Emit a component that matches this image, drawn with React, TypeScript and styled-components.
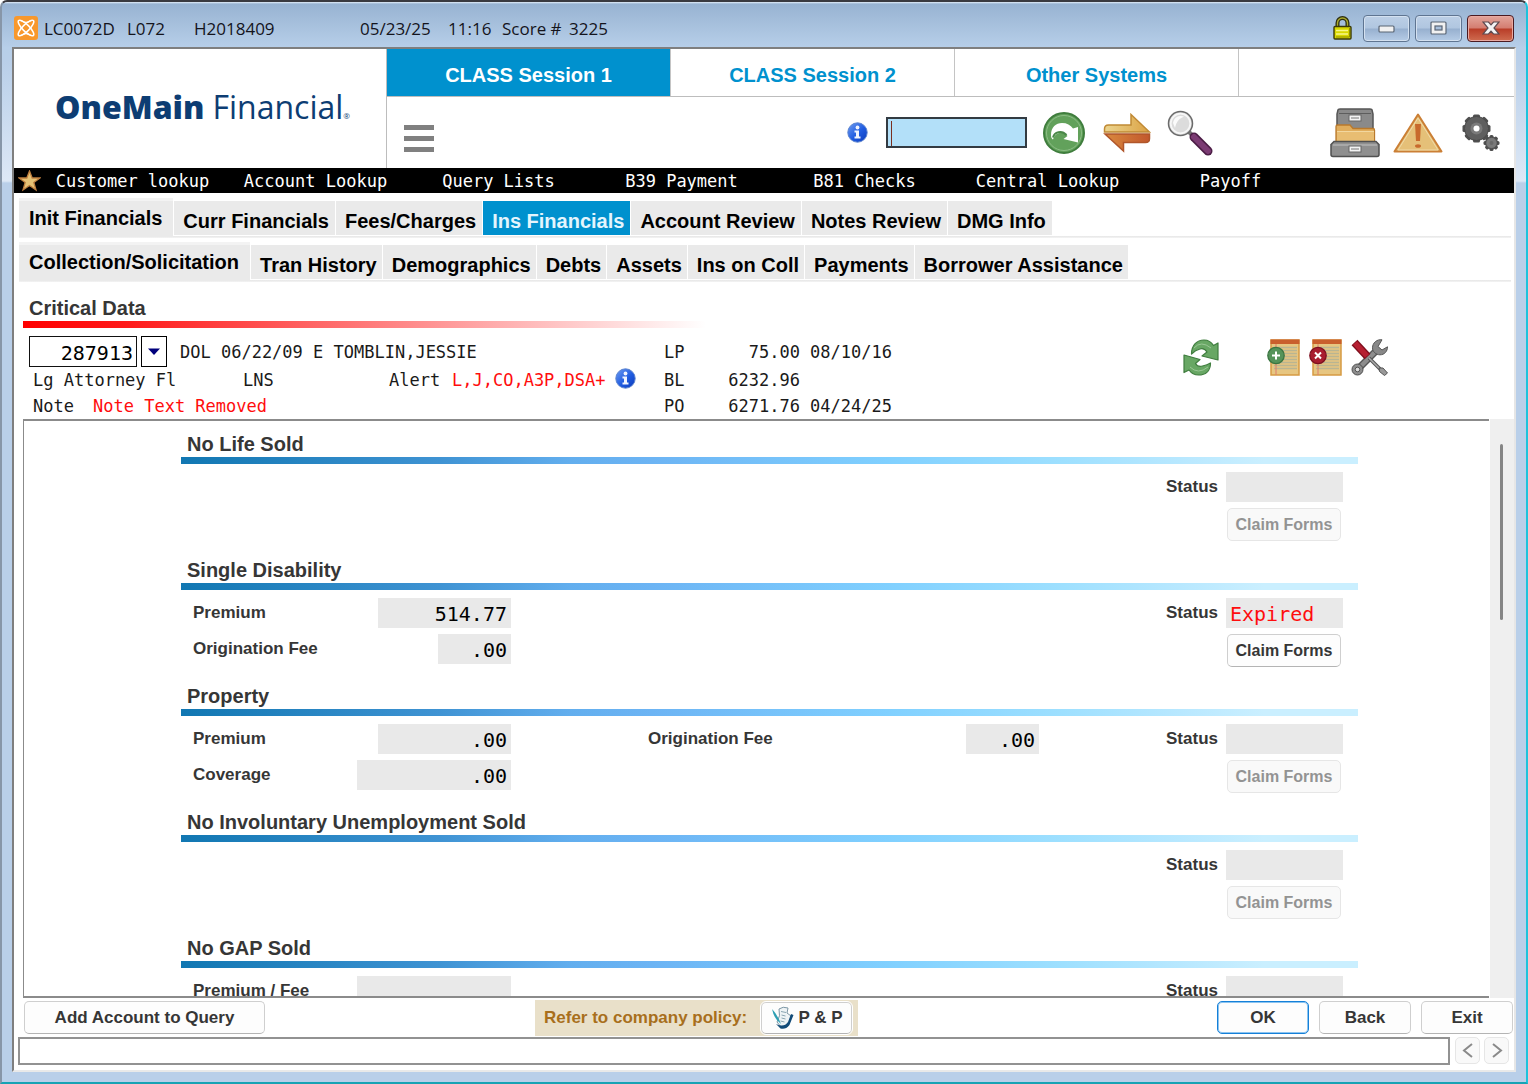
import React from "react";
import styled, { createGlobalStyle, css } from "styled-components";

const SANS = '"Liberation Sans", Arial, sans-serif';
const MONO = '"DejaVu Sans Mono", "Liberation Mono", monospace';
const BLUE = "#0091ce";

const GlobalStyle = createGlobalStyle`
  * { box-sizing: border-box; }
  body { margin: 0; background: #fff; font-family: ${SANS}; color: #000; }
  button, input { font: inherit; color: inherit; margin: 0; }
  button { padding: 0; border: 0; background: none; cursor: pointer; }
  svg { display: block; flex: none; }
`;

/* ---------- window frame ---------- */
const Frame = styled.div`
  height: 100vh;
  display: flex;
  flex-direction: column;
  padding: 0 10px 10px 10px;
  border-style: solid;
  border-width: 2px;
  border-color: #3a3a40 #1cc3dc #17a3b4 #8796a8;
  border-radius: 7px 7px 0 0;
  background: linear-gradient(180deg, #e4eefa 0, #98b3d2 2px, #b7cfe9 46px, #b9cfe9 60px, #dde8f6 179px, #b9cfe9 181px);
`;

const TitleBar = styled.header`
  flex: none;
  display: flex;
  align-items: center;
  height: 45px;
  padding: 7px 0 0 2px;
  font-family: "Open Sans", "Noto Sans", sans-serif;
  font-size: 17px;
  line-height: 24px;
  color: #14141c;
  > svg { margin-right: 6px; }
`;

const TitleText = styled.span<{ $w: number }>`
  width: ${(p) => p.$w}px;
  padding-top: 2px;
  white-space: nowrap;
`;

const WindowControls = styled.div`
  display: flex;
  align-items: center;
  gap: 5px;
  margin-left: auto;
  padding-right: 2px;
`;

const ControlButton = styled.button<{ $close?: boolean }>`
  width: 47px;
  height: 27px;
  display: grid;
  place-items: center;
  border: 1px solid ${(p) => (p.$close ? "#4b1a20" : "#5f7591")};
  border-radius: 4px;
  box-shadow: inset 0 0 0 1px ${(p) => (p.$close ? "#e9aaa2" : "#d4e1f0")};
  background: ${(p) =>
    p.$close
      ? "linear-gradient(#e3a59b 0, #d47d70 48%, #b93d28 52%, #cf6c50 100%)"
      : "linear-gradient(#bccfe6 0, #b0c6e0 48%, #97b0cf 52%, #b6cce6 100%)"};
`;

const LockSlot = styled.span`
  margin-right: 6px;
`;

const Client = styled.main`
  flex: 1;
  min-height: 0;
  display: flex;
  flex-direction: column;
  border-style: solid;
  border-width: 2px;
  border-color: #7f7f7f #e6e6e6 #e9e9e9 #7f7f7f;
  background: #fff;
`;

/* ---------- header ---------- */
const Header = styled.div`
  flex: none;
  display: flex;
  height: 119px;
`;

const LogoCell = styled.div`
  width: 373px;
  display: flex;
  align-items: center;
  padding: 0 0 4px 41px;
  border-right: 1px solid #bdbdbd;
`;

const Logo = styled.div`
  display: flex;
  align-items: baseline;
  gap: 8px;
  font-family: "Open Sans", "Noto Sans", sans-serif;
  font-size: 32px;
  line-height: 40px;
  color: #0d3d73;
  strong { font-weight: 800; }
  sup { font-size: 8px; line-height: 8px; vertical-align: baseline; }
`;

const HeaderMain = styled.div`
  flex: 1;
  display: flex;
  flex-direction: column;
`;

const SessionTabs = styled.div`
  display: flex;
  height: 48px;
  border-bottom: 1px solid #bdbdbd;
`;

const SessionTab = styled.button<{ $active?: boolean }>`
  width: 284px;
  padding-top: 5px;
  border-right: 1px solid #c4c4c4;
  font-size: 20px;
  font-weight: 700;
  line-height: 24px;
  color: ${(p) => (p.$active ? "#fff" : BLUE)};
  background: ${(p) => (p.$active ? BLUE : "transparent")};
`;

const Toolbar = styled.div`
  flex: 1;
  display: flex;
  align-items: center;
  padding: 0 2px 0 17px;
`;

const MenuButton = styled.button`
  display: grid;
  gap: 6px;
  width: 30px;
  margin: 12px auto 0 0;
  i { height: 5px; background: #808080; }
`;

const SearchInput = styled.input`
  width: 141px;
  height: 31px;
  margin: 0 5px 0 18px;
  padding: 0 4px;
  border: 2px solid #333b42;
  border-radius: 0;
  background: linear-gradient(#7a2f20, #7a2f20) 3px 2px / 1px 25px no-repeat #b3e0f9;
  outline: none;
`;

const ToolGroup = styled.div`
  display: flex;
  & + & { margin-left: 102px; }
`;

const ToolButton = styled.button`
  width: 63px;
  height: 50px;
  display: grid;
  place-items: center;
`;

const QuickBar = styled.nav`
  flex: none;
  display: flex;
  align-items: center;
  height: 25px;
  padding-left: 4px;
  background: #000;
  color: #fff;
  font-family: ${MONO};
  font-size: 17px;
  line-height: 23px;
`;

const QuickLink = styled.a`
  width: 183px;
  padding-top: 2px;
  text-align: center;
  color: inherit;
  text-decoration: none;
  white-space: nowrap;
`;

/* ---------- page tabs ---------- */
const TabRows = styled.div`
  flex: none;
  display: grid;
  gap: 4px;
  padding: 5px 3px 0 5px;
`;

const TabRow = styled.div`
  display: flex;
  align-items: flex-end;
  gap: 1px;
  height: 40px;
  padding-bottom: 3px;
  background: linear-gradient(#e6e6e6, #f4f4f4) 0 100% / 100% 2px no-repeat;
`;

const PageTab = styled.button<{ $raised?: boolean; $active?: boolean; $tight?: boolean }>`
  height: 34px;
  padding: 6px ${(p) => (p.$tight ? 5 : 6)}px 0 9px;
  background: #eaeaea;
  font-size: 20px;
  font-weight: 700;
  line-height: 24px;
  white-space: nowrap;
  ${(p) =>
    p.$raised &&
    css`
      align-self: stretch;
      height: 39px;
      padding: 0 11px 2px 10px;
      border-top: 3px solid #f3f3f3;
    `}
  ${(p) =>
    p.$active &&
    css`
      color: #e4f5fd;
      background: ${BLUE};
    `}
`;

/* ---------- critical data ---------- */
const Critical = styled.section`
  flex: none;
  padding: 13px 126px 0 9px;
`;

const SectionTitle = styled.h2`
  margin: 0;
  padding-left: 6px;
  font-size: 20px;
  font-weight: 700;
  line-height: 26px;
  color: #363636;
`;

const RedRule = styled.div`
  width: 50%;
  height: 7px;
  background: linear-gradient(90deg, #f00 0, #ff1a1a 15%, #fff 100%);
`;

const CriticalBody = styled.div`
  display: flex;
  padding: 8px 0 0 6px;
  font-family: ${MONO};
  font-size: 17px;
  line-height: 26px;
  white-space: nowrap;
`;

const Lines = styled.div`
  width: 635px;
  display: grid;
  grid-template-rows: 31px 26px 26px;
`;

const Line = styled.div`
  display: flex;
  align-items: center;
  padding-left: 4px;
  &:first-child { padding-left: 0; }
`;

const Cell = styled.span<{ $w?: number; $red?: boolean }>`
  ${(p) => p.$w && `width: ${p.$w}px;`}
  color: ${(p) => (p.$red ? "#ff0d0d" : "#1a1a1a")};
`;

const AccountInput = styled.input`
  width: 108px;
  height: 31px;
  margin-right: 4px;
  padding: 2px 3px 0 0;
  border: 1px solid #111;
  border-radius: 0;
  font-size: 20px;
  text-align: right;
  background: #fff;
`;

const DropButton = styled.button`
  width: 26px;
  height: 31px;
  display: grid;
  place-items: center;
  margin-right: 13px;
  border: 1px solid #000;
`;

const InfoButton = styled.button`
  margin: 0 0 4px 9px;
`;

const Balances = styled.table`
  border-collapse: collapse;
  td, th { padding: 0; height: 26px; font-weight: 400; text-align: left; color: #1a1a1a; }
  tr:first-child > * { height: 31px; }
  th { width: 36px; }
  td:nth-child(2) { width: 100px; text-align: right; }
  td:nth-child(3) { padding-left: 10px; }
`;

const RecordTools = styled.div`
  display: flex;
  align-items: flex-start;
  gap: 9px;
  margin-left: auto;
  padding-top: 3px;
  button:first-child { margin-right: 39px; }
`;

/* ---------- insurance panel ---------- */
const PanelRow = styled.div`
  flex: 1;
  min-height: 0;
  display: flex;
  padding-left: 9px;
`;

const Panel = styled.div`
  flex: 1;
  overflow: hidden;
  padding: 10px 131px 0 157px;
  border: 2px solid #8b8b8b;
  border-width: 2px 0 2px 1px;
`;

const ScrollTrack = styled.div`
  width: 24px;
  margin-left: 1px;
  padding: 25px 0 0 10px;
  background: #efefef;
`;

const ScrollThumb = styled.div`
  width: 3px;
  height: 176px;
  border-radius: 2px;
  background: #858585;
`;

const Policy = styled.section`
  height: 126px;
`;

const BlueRule = styled.div`
  height: 7px;
  background: linear-gradient(90deg, #1177b2 0, #3f93d3 22%, #62aeee 33%, #6cb4f4 40%, #80d0ff 60%, #9ee0ff 75%, #b8e8ff 85%, #caefff 92%);
`;

const PolicyBody = styled.div`
  display: grid;
  grid-template-columns: 318px 391px 1fr;
  justify-content: space-between;
  padding: 8px 15px 0 12px;
  font-size: 17px;
  font-weight: 700;
  color: #363636;
`;

const Stack = styled.div<{ $inset?: boolean; $end?: boolean }>`
  display: flex;
  flex-direction: column;
  gap: 6px;
  ${(p) => p.$end && "align-items: flex-end;"}
`;

const PolicyColumns = styled(PolicyBody)`
  grid-template-columns: 318px 137px 391px 1fr;
  ${Stack}:nth-child(2) { grid-column: 3; }
`;

const Field = styled.label`
  display: flex;
  justify-content: space-between;
  gap: 8px;
  height: 30px;
  line-height: 30px;
  white-space: nowrap;
`;

const Value = styled.input<{ $w: number; $alert?: boolean }>`
  width: ${(p) => p.$w}px;
  height: 30px;
  padding: 2px 4px 0;
  border: 0;
  border-radius: 0;
  background: #e9e9e9;
  font-family: ${MONO};
  font-size: 20px;
  font-weight: 400;
  text-align: ${(p) => (p.$alert ? "left" : "right")};
  color: ${(p) => (p.$alert ? "#ff0d0d" : "#000")};
`;

const PushButton = styled.button<{ $w: number; $primary?: boolean }>`
  width: ${(p) => p.$w}px;
  height: 33px;
  padding-top: 1px;
  border: 1px solid ${(p) => (p.$primary ? "#1580d8" : "#cfcfcf")};
  border-bottom-color: ${(p) => (p.$primary ? "#1580d8" : "#b4b4b4")};
  border-radius: 5px;
  ${(p) => p.$primary && "box-shadow: inset 0 0 0 1px #8cc4f0;"}
  background: #fdfdfd;
  font-size: 17px;
  font-weight: 700;
  line-height: 24px;
  color: #363636;
  white-space: nowrap;
  &:disabled {
    color: #939393;
    border-color: #e6e6e6;
    background: #f9f9f9;
  }
`;

const ClaimButton = styled(PushButton)`
  margin-right: 2px;
  font-size: 16px;
`;

/* ---------- footer ---------- */
const Footer = styled.footer`
  flex: none;
  display: grid;
  grid-template-columns: 521px auto 1fr;
  align-items: center;
  height: 39px;
  padding: 0 1px 0 0;
`;

const FooterStart = styled.div`
  padding-left: 10px;
`;

const FooterEnd = styled.div`
  display: flex;
  justify-content: flex-end;
  gap: 10px;
`;

const PolicyNote = styled.div`
  display: flex;
  align-items: center;
  gap: 14px;
  height: 36px;
  padding: 0 6px 0 9px;
  background: #e9e0c9;
  font-size: 17px;
  font-weight: 700;
  color: #a86f1c;
`;

const PolicyButton = styled(PushButton)`
  display: flex;
  align-items: center;
  justify-content: center;
  gap: 5px;
  height: 32px;
  outline: 1px solid #fff;
`;

const StatusRow = styled.div`
  flex: none;
  display: flex;
  gap: 4px;
  padding: 0 5px 5px 4px;
`;

const StatusInput = styled.input`
  flex: 1;
  height: 28px;
  margin-right: 1px;
  border: 2px solid #929292;
  border-radius: 0;
  background: #fff;
`;

const PageButton = styled.button`
  width: 25px;
  height: 27px;
  display: grid;
  place-items: center;
  border: 1px solid #e6e6e6;
  border-radius: 5px;
  background: #f9f9f9;
`;

/* ---------- drawings ---------- */
const AppIcon = () => (
  <svg width="24" height="24" viewBox="0 0 24 24" aria-hidden="true">
    <rect width="24" height="24" rx="3" fill="#f8982c" />
    <g fill="none" stroke="#fff" strokeWidth="1.5">
      <ellipse cx="12" cy="12" rx="10.5" ry="3.4" transform="rotate(45 12 12)" />
      <ellipse cx="12" cy="12" rx="10.5" ry="3.4" transform="rotate(-45 12 12)" />
      <path d="M7 4.500q5 3.600 10 0M7 19.500q5-3.600 10 0" strokeWidth="1.200" />
    </g>
  </svg>
);

const LockIcon = () => (
  <svg width="19" height="24" viewBox="0 0 19 24" aria-hidden="true">
    <path d="M4.500 12V7a5 5 0 0 1 10 0v5" fill="none" stroke="#2e2e10" strokeWidth="4" />
    <path d="M4.500 12V7a5 5 0 0 1 10 0v5" fill="none" stroke="#a9a92c" strokeWidth="1.400" />
    <rect x="1" y="10.500" width="17" height="12.500" rx="1" fill="#d9d900" stroke="#3a3a08" strokeWidth="1.400" />
    <path d="M3 14.500h12M3 18h12" stroke="#f8f88a" strokeWidth="1.300" />
    <path d="M3 21h13.500V12" stroke="#8f8f00" fill="none" />
  </svg>
);

const MinimizeGlyph = () => (
  <svg width="18" height="9" viewBox="0 0 18 9" aria-hidden="true">
    <rect x="1" y="2" width="15" height="6" rx="1" fill="#f1f1f1" stroke="#5b6675" strokeWidth="1.200" />
  </svg>
);

const MaximizeGlyph = () => (
  <svg width="17" height="14" viewBox="0 0 17 14" aria-hidden="true">
    <rect x="1" y="1" width="15" height="12" rx="1" fill="#f1f1f1" stroke="#5b6675" strokeWidth="1.200" />
    <rect x="5" y="5" width="7" height="4" fill="#a8bfdb" stroke="#5b6675" strokeWidth="1.200" />
  </svg>
);

const CloseGlyph = () => (
  <svg width="18" height="14" viewBox="0 0 18 14" aria-hidden="true">
    <path d="M1 1h5.500L9 3.800 11.500 1H17l-5 6 5 6h-5.500L9 10.200 6.500 13H1l5-6z" fill="#f4f4f4" stroke="#5c4a50" strokeWidth="1.200" />
  </svg>
);

const InfoIcon = () => (
  <svg width="21" height="21" viewBox="0 0 21 21" aria-hidden="true">
    <defs>
      <linearGradient id="infoFill" x1="0" y1="0" x2="1" y2="1">
        <stop offset="0" stopColor="#6f9df2" />
        <stop offset=".55" stopColor="#1f5be0" />
        <stop offset="1" stopColor="#0d3ab8" />
      </linearGradient>
    </defs>
    <circle cx="10.500" cy="10.500" r="9.700" fill="url(#infoFill)" stroke="#5b83cf" strokeWidth="1" />
    <circle cx="10.500" cy="5.500" r="1.900" fill="#f1f5ff" />
    <path d="M7.500 8.600h4.500v6h1.500v1.800h-6v-1.800h1.500v-4.200H7.500z" fill="#f1f5ff" />
  </svg>
);

const GoIcon = () => (
  <svg width="42" height="42" viewBox="0 0 42 42" aria-hidden="true">
    <circle cx="21" cy="21" r="20" fill="#62a15b" stroke="#3f7d3d" strokeWidth="2" />
    <circle cx="21" cy="21" r="17.500" fill="none" stroke="#8cbd85" />
    <path d="M8 23C8 15 13 11 19 11c5 0 8.500 2 11 5.500L35 15v15.500L20.500 27l4-3c-2-3-5-4-8.500-3-3 .800-5 3-6 6.500-1.500-.500-2-2.500-2-4.500z" fill="#fff" />
    <path d="M10 25.500c1.500-5.500 8.500-8 13.500-2.500" fill="none" stroke="#4a8748" strokeWidth="2" />
  </svg>
);

const SwapIcon = () => (
  <svg width="48" height="40" viewBox="0 0 48 40" aria-hidden="true">
    <defs>
      <linearGradient id="swapTop" x1="0" x2="1">
        <stop offset="0" stopColor="#ecd58f" />
        <stop offset="1" stopColor="#dba244" />
      </linearGradient>
      <linearGradient id="swapBottom" x1="0" x2="1">
        <stop offset="0" stopColor="#d9893e" />
        <stop offset="1" stopColor="#c2582d" />
      </linearGradient>
    </defs>
    <path d="M1.500 19v-3q0-4 4-4h22.500V1.500L46.500 19z" fill="url(#swapTop)" stroke="#c08a35" strokeWidth="1.500" />
    <path d="M46.500 21v4.500q0 4-4 4H20.500V38L2 21z" fill="url(#swapBottom)" stroke="#b0562a" strokeWidth="1.500" />
  </svg>
);

const MagnifierIcon = () => (
  <svg width="46" height="46" viewBox="0 0 46 46" aria-hidden="true">
    <path d="M20 20l7 7" stroke="#777" strokeWidth="4" />
    <path d="M27 27l14 14" stroke="#4b1d45" strokeWidth="9" strokeLinecap="round" />
    <path d="M27 27l14 14" stroke="#7b3b73" strokeWidth="6" strokeLinecap="round" />
    <circle cx="13.500" cy="13.500" r="12" fill="#d2d2d2" stroke="#6b6b6b" strokeWidth="1.500" />
    <circle cx="13.500" cy="13.500" r="9.800" fill="#dcdcdc" stroke="#f7f7f7" strokeWidth="1.800" />
    <path d="M6 13a8 8 0 0 1 11-6.500Q9 10 8 18z" fill="#fbfbfb" />
  </svg>
);

const CabinetIcon = () => (
  <svg width="50" height="50" viewBox="0 0 50 50" aria-hidden="true">
    <path d="M8 2q0-1 2-1h30q2 0 2 1l1 4v18H7V6z" fill="#8a8a8a" stroke="#555" strokeWidth="1.500" />
    <path d="M9 5.500h32" stroke="#5d5d5d" />
    <rect x="19" y="7" width="12" height="6" fill="#f3f3f3" stroke="#666" />
    <path d="M21 10h8" stroke="#777" />
    <path d="M6 34V18.500q0-1.500 1.500-1.500H20l3 3.500h20q1.500 0 1.500 1.500v12z" fill="#e0ad5d" stroke="#b9792c" strokeWidth="1.300" />
    <path d="M7 24h37v9H7z" fill="#e8bd72" />
    <path d="M7 23.500h37" stroke="#f2d79f" />
    <path d="M4 33.500h42l3 3v10q0 2-2 2H3q-2 0-2-2v-10z" fill="#8f8f8f" stroke="#505050" strokeWidth="1.500" />
    <path d="M3 37h44" stroke="#c1c1c1" />
    <rect x="19" y="38" width="12" height="6" fill="#f3f3f3" stroke="#666" />
    <path d="M21 41h8" stroke="#777" />
  </svg>
);

const WarningIcon = () => (
  <svg width="50" height="42" viewBox="0 0 50 42" aria-hidden="true">
    <path d="M25 2.500L48.500 39.500h-47z" fill="#e5c078" stroke="#cb7f35" strokeWidth="2" strokeLinejoin="round" />
    <path d="M25 6L45 38H5z" fill="none" stroke="#f0dba9" />
    <path d="M22 12h6l-1 17h-4z" fill="#c86a2c" />
    <ellipse cx="25" cy="34" rx="3" ry="1.800" fill="#c86a2c" />
  </svg>
);

const Cog = ({ cx, cy, r, hole }: { cx: number; cy: number; r: number; hole: number }) => (
  <g transform={`translate(${cx} ${cy})`}>
    {[0, 45, 90, 135].map((a) => (
      <rect key={a} x={-r} y={-r / 4} width={r * 2} height={r / 2} rx="1.500" fill="#4f4f4f" transform={`rotate(${a})`} />
    ))}
    <circle r={r - 2} fill="#5f5f5f" stroke="#4a4a4a" />
    <circle r={hole + 3} fill="#7a7a7a" />
    <circle r={hole} fill={hole > 2 ? "#fff" : "#686868"} />
  </g>
);

const GearsIcon = () => (
  <svg width="38" height="38" viewBox="0 0 38 38" aria-hidden="true">
    <Cog cx={14.5} cy={14.5} r={14} hole={3} />
    <Cog cx={29.5} cy={29} r={8} hole={2} />
  </svg>
);

const StarIcon = () => (
  <svg width="23" height="22" viewBox="0 0 23 22" aria-hidden="true">
    <path d="M11.500 1l2.700 7H22l-6.200 4.500L18 20l-6.500-4.500L5 20l2.200-7.500L1 8h7.800z" fill="#e6c275" stroke="#bf7f3f" strokeWidth="1.300" />
  </svg>
);

const RefreshIcon = () => (
  <svg width="36" height="37" viewBox="0 0 36 37" aria-hidden="true">
    <g fill="#68a764" stroke="#3f7d3e" strokeWidth="1.200" strokeLinejoin="round">
      <path d="M8.500 15C8.500 6 14 1 21 1c4 0 7 1.500 9.500 5.500L35 4v17l-16-4 5-4c-2-3-4-4-7-3-3.500.800-6 2.500-8.500 5z" />
      <path d="M27.500 24c0 8-5 12-12 12-4 0-7-1.500-9.500-5L1 33.500V16l16 4.500-4.500 4c1.500 2.500 4 3.500 7 2.500 3.500-.800 5.500-1.500 8-3z" />
    </g>
    <path d="M11 9q7-8 17 0M7 28q8 8 18 0" fill="none" stroke="#9ac795" />
  </svg>
);

const NoteIcon = ({ remove }: { remove?: boolean }) => (
  <svg width="33" height="37" viewBox="0 0 33 37" aria-hidden="true">
    <rect x="4" y="1" width="28" height="35" fill="#e7c681" stroke="#d69a43" strokeWidth="1.500" />
    <rect x="3.500" y=".5" width="29" height="4.500" fill="#c95f2d" />
    <path d="M7 8.500h23M7 11.500h23M7 14.500h23M7 17.500h23M7 20.500h23M7 23.500h23M7 26.500h23M7 29.500h23" stroke="#b9b592" strokeWidth="1.300" />
    <path d="M9 5v31" stroke="#dc7f6c" />
    <circle cx="9" cy="16.500" r="8.200" fill={remove ? "#a81d2f" : "#55935a"} stroke={remove ? "#7d1020" : "#3a7541"} strokeWidth="1.300" />
    {remove ? (
      <path d="M6 13.500l6 6m0-6l-6 6" stroke="#fff" strokeWidth="2" />
    ) : (
      <path d="M9 12.500v8m-4-4h8" stroke="#fff" strokeWidth="2" />
    )}
  </svg>
);

const ToolsIcon = () => (
  <svg width="37" height="37" viewBox="0 0 37 37" aria-hidden="true">
    <path d="M8 29L25 12" stroke="#555" strokeWidth="7" />
    <path d="M8 29L25 12" stroke="#8d8d8d" strokeWidth="4.500" />
    <path d="M31 .8c-5-.8-9.500 3-9.500 8 0 4 3.500 7 7.500 7 4.500 0 7.500-3.500 7.500-8L31 11l-4-3.500z" fill="#888" stroke="#555" />
    <circle cx="6.500" cy="30.500" r="5.500" fill="#8d8d8d" stroke="#4f4f4f" />
    <circle cx="6.500" cy="30.500" r="2.300" fill="#ddd" stroke="#555" />
    <path d="M18 19l12 12" stroke="#555" strokeWidth="3.500" />
    <path d="M18 19l12 12" stroke="#aaa" strokeWidth="1.500" />
    <path d="M28 29l4 0 4.500 5-3 2.500-5-4z" fill="#999" stroke="#555" />
    <path d="M3.500 3.500l13 14" stroke="#7f0f1d" strokeWidth="8" />
    <path d="M4 4l12 13" stroke="#b61f31" strokeWidth="5.500" />
  </svg>
);

const ScrollPenIcon = () => (
  <svg width="23" height="24" viewBox="0 0 23 24" aria-hidden="true">
    <path d="M8 3q4-3 9-1l-1 5 4 3-2 8q-3 4-8 3l-4-5q4-6 2-13z" fill="#eef3f5" stroke="#7c97a5" />
    <path d="M20 8l2.500 1-4 10q-4 5-9 3.500L5 18q8 4 12-2z" fill="#124b78" />
    <path d="M10 5.500l5 1M10.500 9l4 1M10.500 12l4 1M9.500 15l4 1" stroke="#8aa6b2" />
    <path d="M1 3q5 5 9 15Q3 13 1 3z" fill="#2e9fb3" />
  </svg>
);

const Chevron = ({ right }: { right?: boolean }) => (
  <svg width="12" height="15" viewBox="0 0 12 15" aria-hidden="true">
    <path d={right ? "M2 1l8 6.500L2 14" : "M10 1L2 7.500 10 14"} fill="none" stroke="#8a8a8a" strokeWidth="2" />
  </svg>
);

/* ---------- data ---------- */
const quickLinks = ["Customer lookup", "Account Lookup", "Query Lists", "B39 Payment", "B81 Checks", "Central Lookup", "Payoff"];
const financialTabs = ["Init Financials", "Curr Financials", "Fees/Charges", "Ins Financials", "Account Review", "Notes Review", "DMG Info"];
const accountTabs = ["Collection/Solicitation", "Tran History", "Demographics", "Debts", "Assets", "Ins on Coll", "Payments", "Borrower Assistance"];

type Amount = { label: string; value: string; width: number };
type PolicyData = { title: string; left: Amount[]; middle?: Amount; status?: string; noClaim?: boolean };

const policies: PolicyData[] = [
  { title: "No Life Sold", left: [] },
  {
    title: "Single Disability",
    left: [
      { label: "Premium", value: "514.77", width: 133 },
      { label: "Origination Fee", value: ".00", width: 73 },
    ],
    status: "Expired",
  },
  {
    title: "Property",
    left: [
      { label: "Premium", value: ".00", width: 133 },
      { label: "Coverage", value: ".00", width: 154 },
    ],
    middle: { label: "Origination Fee", value: ".00", width: 73 },
  },
  { title: "No Involuntary Unemployment Sold", left: [] },
  { title: "No GAP Sold", left: [{ label: "Premium / Fee", value: "", width: 154 }], noClaim: true },
];

const AmountField = ({ label, value, width }: Amount) => (
  <Field>
    {label}
    <Value $w={width} readOnly value={value} />
  </Field>
);

const PolicySection = ({ title, left, middle, status, noClaim }: PolicyData) => (
  <Policy>
    <SectionTitle>{title}</SectionTitle>
    <BlueRule />
    <PolicyColumns>
      <Stack>
        {left.map((a) => (
          <AmountField key={a.label} {...a} />
        ))}
      </Stack>
      <Stack>{middle && <AmountField {...middle} />}</Stack>
      <Stack $end>
        <Field>
          Status
          <Value $w={117} $alert readOnly value={status ?? ""} />
        </Field>
        {!noClaim && (
          <ClaimButton $w={114} disabled={!status}>
            Claim Forms
          </ClaimButton>
        )}
      </Stack>
    </PolicyColumns>
  </Policy>
);

const TabStrip = ({ labels, active, tight }: { labels: string[]; active?: string; tight?: boolean }) => (
  <TabRow role="tablist">
    {labels.map((label, i) => (
      <PageTab key={label} role="tab" $raised={i === 0} $active={label === active} $tight={tight} aria-selected={label === active}>
        {label}
      </PageTab>
    ))}
  </TabRow>
);

export default function App() {
  return (
    <>
      <GlobalStyle />
      <Frame>
        <TitleBar>
          <AppIcon />
          <TitleText $w={83}>LC0072D</TitleText>
          <TitleText $w={67}>L072</TitleText>
          <TitleText $w={166}>H2018409</TitleText>
          <TitleText $w={88}>05/23/25</TitleText>
          <TitleText $w={54}>11:16</TitleText>
          <TitleText $w={67}>Score #</TitleText>
          <TitleText $w={40}>3225</TitleText>
          <WindowControls>
            <LockSlot>
              <LockIcon />
            </LockSlot>
            <ControlButton aria-label="Minimize"><MinimizeGlyph /></ControlButton>
            <ControlButton aria-label="Maximize"><MaximizeGlyph /></ControlButton>
            <ControlButton $close aria-label="Close"><CloseGlyph /></ControlButton>
          </WindowControls>
        </TitleBar>

        <Client>
          <Header>
            <LogoCell>
              <Logo>
                <strong>OneMain</strong>
                <span>Financial<sup>®</sup></span>
              </Logo>
            </LogoCell>
            <HeaderMain>
              <SessionTabs role="tablist">
                <SessionTab role="tab" $active aria-selected>CLASS Session 1</SessionTab>
                <SessionTab role="tab">CLASS Session 2</SessionTab>
                <SessionTab role="tab">Other Systems</SessionTab>
              </SessionTabs>
              <Toolbar>
                <MenuButton aria-label="Menu"><i /><i /><i /></MenuButton>
                <button aria-label="Information"><InfoIcon /></button>
                <SearchInput aria-label="Command" />
                <ToolGroup>
                  <ToolButton aria-label="Go"><GoIcon /></ToolButton>
                  <ToolButton aria-label="Switch"><SwapIcon /></ToolButton>
                  <ToolButton aria-label="Search"><MagnifierIcon /></ToolButton>
                </ToolGroup>
                <ToolGroup>
                  <ToolButton aria-label="Files"><CabinetIcon /></ToolButton>
                  <ToolButton aria-label="Warnings"><WarningIcon /></ToolButton>
                  <ToolButton aria-label="Settings"><GearsIcon /></ToolButton>
                </ToolGroup>
              </Toolbar>
            </HeaderMain>
          </Header>

          <QuickBar>
            <StarIcon />
            {quickLinks.map((label) => (
              <QuickLink key={label} href="#">{label}</QuickLink>
            ))}
          </QuickBar>

          <TabRows>
            <TabStrip labels={financialTabs} active="Ins Financials" />
            <TabStrip labels={accountTabs} tight />
          </TabRows>

          <Critical>
            <SectionTitle>Critical Data</SectionTitle>
            <RedRule />
            <CriticalBody>
              <Lines>
                <Line>
                  <AccountInput aria-label="Account number" defaultValue="287913" />
                  <DropButton aria-label="Choose account" aria-haspopup="listbox">
                    <svg width="12" height="7" viewBox="0 0 12 7" aria-hidden="true"><path d="M0 .5h12L6 7z" fill="#00007c" /></svg>
                  </DropButton>
                  <Cell>DOL 06/22/09 E TOMBLIN,JESSIE</Cell>
                </Line>
                <Line>
                  <Cell $w={210}>Lg Attorney Fl</Cell>
                  <Cell $w={146}>LNS</Cell>
                  <Cell $w={63}>Alert</Cell>
                  <Cell $red>L,J,CO,A3P,DSA+</Cell>
                  <InfoButton aria-label="Alert information"><InfoIcon /></InfoButton>
                </Line>
                <Line>
                  <Cell $w={60}>Note</Cell>
                  <Cell $red>Note Text Removed</Cell>
                </Line>
              </Lines>
              <Balances>
                <tbody>
                  <tr><th scope="row">LP</th><td>75.00</td><td>08/10/16</td></tr>
                  <tr><th scope="row">BL</th><td>6232.96</td><td /></tr>
                  <tr><th scope="row">PO</th><td>6271.76</td><td>04/24/25</td></tr>
                </tbody>
              </Balances>
              <RecordTools>
                <button aria-label="Refresh"><RefreshIcon /></button>
                <button aria-label="Add note"><NoteIcon /></button>
                <button aria-label="Remove note"><NoteIcon remove /></button>
                <button aria-label="Tools"><ToolsIcon /></button>
              </RecordTools>
            </CriticalBody>
          </Critical>

          <PanelRow>
            <Panel>
              {policies.map((p) => (
                <PolicySection key={p.title} {...p} />
              ))}
            </Panel>
            <ScrollTrack>
              <ScrollThumb />
            </ScrollTrack>
          </PanelRow>

          <Footer>
            <FooterStart>
              <PushButton $w={241}>Add Account to Query</PushButton>
            </FooterStart>
            <PolicyNote>
              Refer to company policy:
              <PolicyButton $w={91}>
                <ScrollPenIcon />P &amp; P
              </PolicyButton>
            </PolicyNote>
            <FooterEnd>
              <PushButton $w={92} $primary>OK</PushButton>
              <PushButton $w={92}>Back</PushButton>
              <PushButton $w={92}>Exit</PushButton>
            </FooterEnd>
          </Footer>
          <StatusRow>
            <StatusInput aria-label="Message" readOnly />
            <PageButton aria-label="Previous message"><Chevron /></PageButton>
            <PageButton aria-label="Next message"><Chevron right /></PageButton>
          </StatusRow>
        </Client>
      </Frame>
    </>
  );
}
